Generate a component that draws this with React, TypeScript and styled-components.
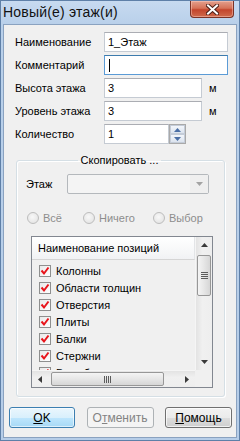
import React from 'react';
import styled, { createGlobalStyle } from 'styled-components';

const Global = createGlobalStyle`
  html, body { margin: 0; padding: 0; background: #ffffff; }
  body { font-family: "Liberation Sans", Arial, sans-serif; font-size: 11px; color: #000; }
  * { box-sizing: border-box; }
`;

const Window = styled.div`
  width: 240px;
  height: 441px;
  border: 1px solid #5f80a8;
  background: linear-gradient(180deg, #c7daf0 0px, #b9d0ea 23px, #b6cde8 100%);
  padding: 0 2px 2px 2px;
  display: flex;
  flex-direction: column;
`;

const TitleBar = styled.div`
  height: 23px;
  flex-shrink: 0;
  display: flex;
  justify-content: space-between;
  align-items: flex-start;
`;

const Title = styled.div`
  font-family: "Liberation Sans", Arial, sans-serif;
  font-size: 14px;
  line-height: 16px;
  letter-spacing: 0.2px;
  padding-top: 3px;
  color: #111;
`;

const CloseButton = styled.div`
  width: 44px;
  height: 17px;
  margin-right: 3px;
  border: 1px solid #7a3226;
  border-top: none;
  border-radius: 0 0 4px 4px;
  background: linear-gradient(180deg, #e3a08e 0%, #d67258 45%, #c3452c 55%, #cf6a4c 100%);
  display: flex;
  align-items: center;
  justify-content: center;
  box-shadow: inset 0 0 0 1px rgba(255, 210, 200, 0.45);
`;

const Client = styled.div`
  flex: 1;
  border: 1px solid #8aa2c0;
  background: #f0f0f0;
  display: flex;
  flex-direction: column;
`;

const FormGrid = styled.div`
  display: grid;
  grid-template-columns: 89px auto;
  grid-auto-rows: 20px;
  row-gap: 3px;
  padding: 7px 0 0 11px;
`;

const Label = styled.div`
  display: flex;
  align-items: center;
  white-space: nowrap;
`;

const Field = styled.div`
  display: flex;
  align-items: center;
`;

const TextBox = styled.div<{ $w: number; $focused?: boolean }>`
  width: ${(p) => p.$w}px;
  height: 20px;
  background: #fff;
  border: 1px solid ${(p) => (p.$focused ? '#5b9bd6' : '#c5cbd3')};
  border-top-color: ${(p) => (p.$focused ? '#3d7bad' : '#abadb3')};
  display: flex;
  align-items: center;
  padding-left: 3px;
  white-space: nowrap;
`;

const Caret = styled.span`
  display: inline-block;
  width: 1px;
  height: 13px;
  background: #000;
  margin-left: 1px;
`;

const Unit = styled.span`
  margin-left: 7px;
`;

const Spinner = styled.div`
  width: 17px;
  height: 20px;
  border: 1px solid #a9a9a9;
  display: flex;
  flex-direction: column;
  background: #f0f0f0;
`;

const SpinBtn = styled.div`
  flex: 1;
  display: flex;
  align-items: center;
  justify-content: center;
  background: linear-gradient(180deg, #f3f6fb, #dbe3ee);
  border: 1px solid #c4ccd8;
`;

const Group = styled.fieldset`
  margin: 10px 11px 0 12px;
  padding: 7px 11px 8px 9px;
  border: 1px solid #d5dfe5;
  border-radius: 3px;
  box-shadow: inset 1px 1px 0 #ffffff, 1px 1px 0 #ffffff;
  min-width: 0;
`;

const Legend = styled.legend`
  margin: 0 auto;
  padding: 0 3px;
  line-height: 13px;
`;

const FloorRow = styled.div`
  display: flex;
  align-items: center;
  height: 20px;
`;

const FloorLabel = styled.div`
  width: 41px;
`;

const Combo = styled.div`
  width: 142px;
  height: 20px;
  border: 1px solid #b4b8bc;
  border-radius: 2px;
  background: #f4f4f4;
  display: flex;
  justify-content: flex-end;
`;

const ComboArrow = styled.div`
  width: 18px;
  display: flex;
  align-items: center;
  justify-content: center;
  background: #efefef;
`;

const RadioRow = styled.div`
  display: grid;
  grid-template-columns: 56px 70px auto;
  margin-top: 17px;
  padding-left: 1px;
  height: 14px;
`;

const RadioItem = styled.div`
  display: flex;
  align-items: center;
  gap: 4px;
  color: #8d8d8d;
`;

const RadioCircle = styled.div`
  width: 12px;
  height: 12px;
  border-radius: 50%;
  border: 1px solid #bdbdbd;
  background: radial-gradient(circle at 45% 40%, #f8f8f8 0%, #e9e9e9 60%, #dcdcdc 100%);
`;

const ListBox = styled.div`
  margin: 11px 0 0 5px;
  width: 182px;
  height: 152px;
  border: 1px solid #828790;
  display: grid;
  grid-template-columns: 163px 17px;
  grid-template-rows: 133px 17px;
  background: #f0f0f0;
`;

const ListContent = styled.div`
  overflow: hidden;
  display: flex;
  flex-direction: column;
`;

const ListHeader = styled.div`
  height: 23px;
  flex-shrink: 0;
  background: linear-gradient(180deg, #ffffff 0%, #f7f8f9 60%, #f1f2f4 100%);
  border-bottom: 1px solid #d5d5d5;
  border-right: 1px solid #e3e5e7;
  display: flex;
  align-items: center;
  padding-left: 6px;
  white-space: nowrap;
`;

const ListRows = styled.div`
  padding-top: 2px;
`;

const ListRow = styled.div`
  height: 17px;
  display: flex;
  align-items: center;
  padding-left: 7px;
  gap: 5px;
  white-space: nowrap;
`;

const VScroll = styled.div`
  background: linear-gradient(90deg, #e3e3e3, #f0f0f0 40%, #eeeeee);
  border-left: 1px solid #f5f5f5;
  display: flex;
  flex-direction: column;
`;

const HScroll = styled.div`
  background: linear-gradient(180deg, #e3e3e3, #f0f0f0 40%, #eeeeee);
  border-top: 1px solid #f5f5f5;
  display: flex;
`;

const Corner = styled.div`
  background: #f0f0f0;
`;

const ArrowBtn = styled.div`
  width: 16px;
  height: 16px;
  flex-shrink: 0;
  display: flex;
  align-items: center;
  justify-content: center;
`;

const VTrack = styled.div`
  flex: 1;
  padding: 2px 1px;
  display: flex;
  flex-direction: column;
`;

const HTrack = styled.div`
  flex: 1;
  padding: 1px 2px;
  display: flex;
`;

const VThumb = styled.div`
  height: 41px;
  border: 1px solid #979797;
  border-radius: 2px;
  background: linear-gradient(90deg, #f4f4f4, #e6e6e6 50%, #d6d6d6);
  display: flex;
  align-items: center;
  justify-content: center;
`;

const HThumb = styled.div`
  width: 113px;
  margin-left: 1px;
  border: 1px solid #979797;
  border-radius: 2px;
  background: linear-gradient(180deg, #f4f4f4, #e6e6e6 50%, #d6d6d6);
  display: flex;
  align-items: center;
  justify-content: center;
`;

const ButtonRow = styled.div`
  display: flex;
  justify-content: space-between;
  padding: 10px 4px 0 5px;
`;

const Button = styled.div<{ $w: number; $variant?: 'default' | 'disabled' }>`
  width: ${(p) => p.$w}px;
  height: 21px;
  border-radius: 3px;
  display: flex;
  align-items: center;
  justify-content: center;
  border: 1px solid
    ${(p) => (p.$variant === 'default' ? '#3c7fb1' : p.$variant === 'disabled' ? '#adb2b5' : '#707070')};
  color: ${(p) => (p.$variant === 'disabled' ? '#838383' : '#000')};
  background: ${(p) =>
    p.$variant === 'default'
      ? 'linear-gradient(180deg, #eaf6fd 0%, #d9f0fc 50%, #bee6fd 51%, #a7d9f5 100%)'
      : p.$variant === 'disabled'
      ? '#f4f4f4'
      : 'linear-gradient(180deg, #f2f2f2 0%, #ebebeb 50%, #dddddd 51%, #cfcfcf 100%)'};
  box-shadow: inset 0 0 0 1px
    ${(p) => (p.$variant === 'default' ? 'rgba(255,255,255,0.6)' : p.$variant === 'disabled' ? 'transparent' : 'rgba(255,255,255,0.7)')};
  font-size: 12px;
`;

const U = styled.span`
  text-decoration: underline;
  text-underline-offset: 1px;
`;

const Tri = ({ dir, color = '#3a3a3a' }: { dir: 'up' | 'down' | 'left' | 'right'; color?: string }) => {
  const pts: Record<string, string> = {
    up: '0,4 7,4 3.5,0',
    down: '0,0 7,0 3.5,4',
    left: '4,0 4,7 0,3.5',
    right: '0,0 0,7 4,3.5',
  };
  const horiz = dir === 'left' || dir === 'right';
  return (
    <svg width={horiz ? 4 : 7} height={horiz ? 7 : 4} viewBox={horiz ? '0 0 4 7' : '0 0 7 4'}>
      <polygon points={pts[dir]} fill={color} />
    </svg>
  );
};

const Grip = ({ vertical }: { vertical: boolean }) =>
  vertical ? (
    <svg width="7" height="7" viewBox="0 0 7 7">
      {[0, 2, 4, 6].map((y) => (
        <line key={y} x1="0" y1={y + 0.5} x2="7" y2={y + 0.5} stroke="#5c5c5c" strokeWidth="1" />
      ))}
    </svg>
  ) : (
    <svg width="7" height="7" viewBox="0 0 7 7">
      {[0, 2, 4, 6].map((x) => (
        <line key={x} x1={x + 0.5} y1="0" x2={x + 0.5} y2="7" stroke="#5c5c5c" strokeWidth="1" />
      ))}
    </svg>
  );

const CheckBox = () => (
  <svg width="12" height="12" viewBox="0 0 12 12">
    <defs>
      <linearGradient id="cbg" x1="0" y1="0" x2="1" y2="1">
        <stop offset="0" stopColor="#e8e8e8" />
        <stop offset="1" stopColor="#ffffff" />
      </linearGradient>
    </defs>
    <rect x="0.5" y="0.5" width="11" height="11" fill="url(#cbg)" stroke="#8e8f8f" />
    <path d="M2.5 5.5 L5 8.5 L9.5 2.5" fill="none" stroke="#e8141b" strokeWidth="2" />
  </svg>
);

const CloseX = () => (
  <svg width="13" height="11" viewBox="0 0 13 11">
    <path d="M2 1.5 L11 9.5 M11 1.5 L2 9.5" stroke="#4e2018" strokeWidth="4" strokeLinecap="square" />
    <path d="M2 1.5 L11 9.5 M11 1.5 L2 9.5" stroke="#ffffff" strokeWidth="2" strokeLinecap="square" />
  </svg>
);

const items = ['Колонны', 'Области толщин', 'Отверстия', 'Плиты', 'Балки', 'Стержни', 'Выработки'];

export default function App() {
  return (
    <>
      <Global />
      <Window>
        <TitleBar>
          <Title>Новый(е) этаж(и)</Title>
          <CloseButton>
            <CloseX />
          </CloseButton>
        </TitleBar>
        <Client>
          <FormGrid>
            <Label>Наименование</Label>
            <Field>
              <TextBox $w={124}>1_Этаж</TextBox>
            </Field>
            <Label>Комментарий</Label>
            <Field>
              <TextBox $w={124} $focused>
                <Caret />
              </TextBox>
            </Field>
            <Label>Высота этажа</Label>
            <Field>
              <TextBox $w={98}>3</TextBox>
              <Unit>м</Unit>
            </Field>
            <Label>Уровень этажа</Label>
            <Field>
              <TextBox $w={98}>3</TextBox>
              <Unit>м</Unit>
            </Field>
            <Label>Количество</Label>
            <Field>
              <TextBox $w={65}>1</TextBox>
              <Spinner>
                <SpinBtn>
                  <Tri dir="up" color="#4a6ea5" />
                </SpinBtn>
                <SpinBtn>
                  <Tri dir="down" color="#4a6ea5" />
                </SpinBtn>
              </Spinner>
            </Field>
          </FormGrid>

          <Group>
            <Legend>Скопировать ...</Legend>
            <FloorRow>
              <FloorLabel>Этаж</FloorLabel>
              <Combo>
                <ComboArrow>
                  <Tri dir="down" color="#a3a3a3" />
                </ComboArrow>
              </Combo>
            </FloorRow>
            <RadioRow>
              <RadioItem>
                <RadioCircle />
                Всё
              </RadioItem>
              <RadioItem>
                <RadioCircle />
                Ничего
              </RadioItem>
              <RadioItem>
                <RadioCircle />
                Выбор
              </RadioItem>
            </RadioRow>
            <ListBox>
              <ListContent>
                <ListHeader>Наименование позиций</ListHeader>
                <ListRows>
                  {items.map((it) => (
                    <ListRow key={it}>
                      <CheckBox />
                      {it}
                    </ListRow>
                  ))}
                </ListRows>
              </ListContent>
              <VScroll>
                <ArrowBtn>
                  <Tri dir="up" />
                </ArrowBtn>
                <VTrack>
                  <VThumb>
                    <Grip vertical />
                  </VThumb>
                </VTrack>
                <ArrowBtn>
                  <Tri dir="down" />
                </ArrowBtn>
              </VScroll>
              <HScroll>
                <ArrowBtn>
                  <Tri dir="left" />
                </ArrowBtn>
                <HTrack>
                  <HThumb>
                    <Grip vertical={false} />
                  </HThumb>
                </HTrack>
                <ArrowBtn>
                  <Tri dir="right" />
                </ArrowBtn>
              </HScroll>
              <Corner />
            </ListBox>
          </Group>

          <ButtonRow>
            <Button $w={66} $variant="default">
              <U>O</U>K
            </Button>
            <Button $w={67} $variant="disabled">
              О<U>т</U>менить
            </Button>
            <Button $w={67}>
              <U>П</U>омощь
            </Button>
          </ButtonRow>
        </Client>
      </Window>
    </>
  );
}
